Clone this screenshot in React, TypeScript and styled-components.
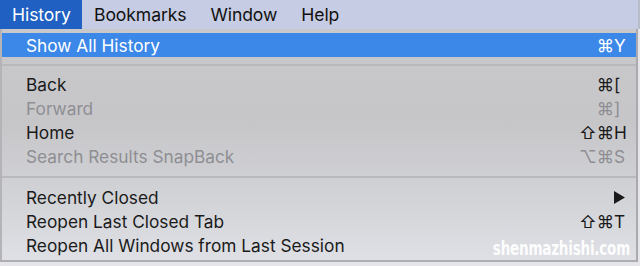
import React from "react";
import styled, { createGlobalStyle } from "styled-components";

const Global = createGlobalStyle`
  html, body { margin: 0; padding: 0; background: #e4e4e8; }
  body { width: 640px; height: 266px; overflow: hidden; font-family: Inter, "Liberation Sans", sans-serif; }
`;

const Screen = styled.div`
  position: relative;
  width: 640px;
  height: 266px;
  display: flex;
  flex-direction: column;
  background: #e6e6ea;
`;

const MenuBar = styled.div`
  display: flex;
  height: 29px;
  background: #c6cce3;
  border-right: 2px solid #b9bccb;
`;

const BarItem = styled.div<{ $active?: boolean }>`
  padding: 0 12px;
  display: flex;
  align-items: center;
  font-size: 17.6px;
  letter-spacing: -0.1px;
  color: ${(p) => (p.$active ? "#ffffff" : "#111")};
  background: ${(p) => (p.$active ? "#1f60c2" : "transparent")};
  width: ${(p) => (p.$active ? "58px" : "auto")};
`;

const Menu = styled.div`
  flex: 1;
  margin-right: 2px;
  margin-bottom: 4px;
  border-left: 2px solid #b3b3b8;
  border-right: 2px solid #a9a9ae;
  border-bottom: 2px solid #acacb1;
  padding: 4px 0 3px;
  background: linear-gradient(180deg, #c9c9cc 0%, #c6c6c9 40%, #d3d4d8 75%, #dfe0e5 100%);
  display: flex;
  flex-direction: column;
`;

const Row = styled.div<{ $selected?: boolean; $disabled?: boolean }>`
  height: 24px;
  display: flex;
  align-items: center;
  padding: 0 8px 0 24px;
  font-size: 17.3px;
  color: ${(p) => (p.$selected ? "#ffffff" : p.$disabled ? "#8e8e93" : "#1a1a1a")};
  background: ${(p) => (p.$selected ? "#3c88e8" : "transparent")};
`;

const Label = styled.span`
  flex: 1;
`;

const Shortcut = styled.span`
  display: flex;
  align-items: center;
`;

const Mods = styled.span`
  text-align: right;
`;

const Key = styled.span`
  width: 14px;
  text-align: left;
`;

const Separator = styled.div<{ $h: number }>`
  height: ${(p) => p.$h}px;
  display: flex;
  align-items: center;
  &::after {
    content: "";
    flex: 1;
    height: 2px;
    background: #b8b8bd;
  }
`;

const Arrow = styled.svg`
  width: 11px;
  height: 13px;
  display: block;
`;

const Watermark = styled.div`
  position: absolute;
  right: 10px;
  bottom: 6px;
  font-family: "DejaVu Sans Condensed", "Liberation Sans Narrow", sans-serif;
  font-stretch: condensed;
  font-weight: 700;
  font-size: 15px;
  letter-spacing: -0.2px;
  transform: scaleY(1.25);
  transform-origin: bottom right;
  color: rgba(255, 255, 255, 0.95);
`;

type Item = {
  label: string;
  mods?: string;
  keyc?: string;
  disabled?: boolean;
  selected?: boolean;
  arrow?: boolean;
};

const ItemRow = ({ label, mods, keyc, disabled, selected, arrow }: Item) => (
  <Row $selected={selected} $disabled={disabled}>
    <Label>{label}</Label>
    <Shortcut>
      {mods && <Mods>{mods}</Mods>}
      <Key>
        {arrow ? (
          <Arrow viewBox="0 0 11 13">
            <path d="M0 0 L11 6.5 L0 13 Z" fill="#1a1a1a" />
          </Arrow>
        ) : (
          keyc
        )}
      </Key>
    </Shortcut>
  </Row>
);

export default function App() {
  return (
    <>
      <Global />
      <Screen>
        <MenuBar>
          <BarItem $active>History</BarItem>
          <BarItem>Bookmarks</BarItem>
          <BarItem>Window</BarItem>
          <BarItem>Help</BarItem>
        </MenuBar>
        <Menu>
          <ItemRow label="Show All History" mods="⌘" keyc="Y" selected />
          <Separator $h={15} />
          <ItemRow label="Back" mods="⌘" keyc="[" />
          <ItemRow label="Forward" mods="⌘" keyc="]" disabled />
          <ItemRow label="Home" mods="⇧⌘" keyc="H" />
          <ItemRow label="Search Results SnapBack" mods="⌥⌘" keyc="S" disabled />
          <Separator $h={17} />
          <ItemRow label="Recently Closed" arrow />
          <ItemRow label="Reopen Last Closed Tab" mods="⇧⌘" keyc="T" />
          <ItemRow label="Reopen All Windows from Last Session" />
        </Menu>
        <Watermark>shenmazhishi.com</Watermark>
      </Screen>
    </>
  );
}
